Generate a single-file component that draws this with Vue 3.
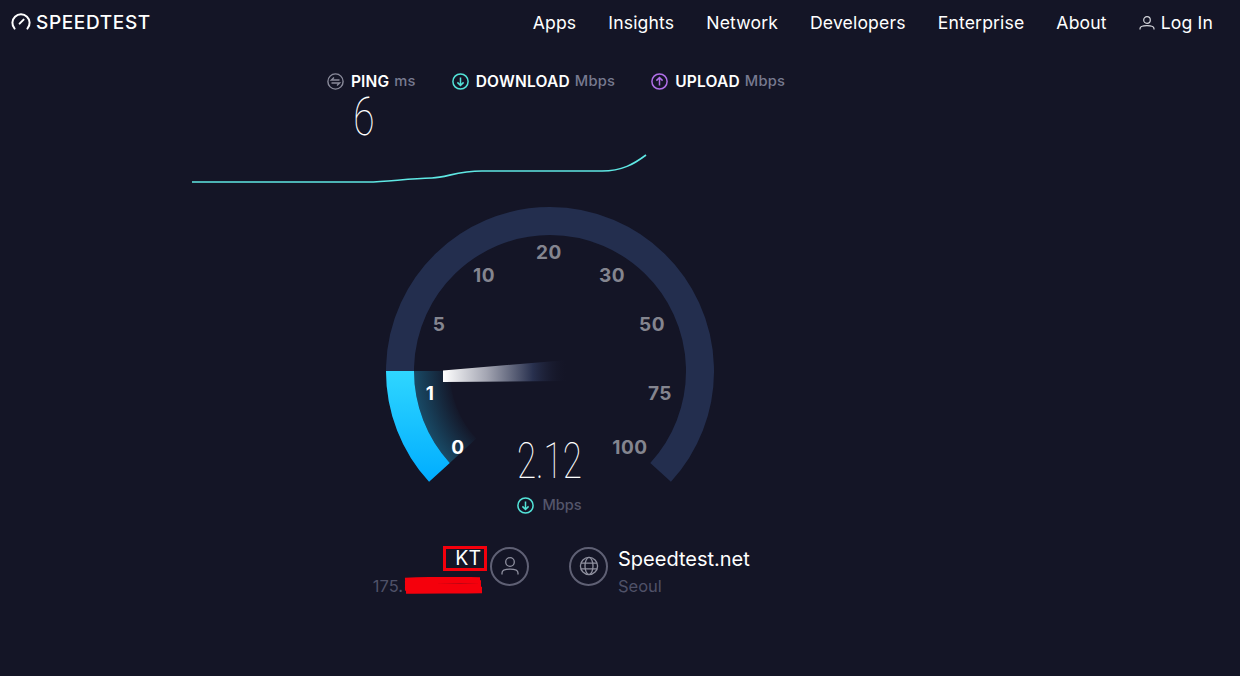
<script setup>
const navItems = ['Apps', 'Insights', 'Network', 'Developers', 'Enterprise', 'About']
const ticks = [
  { t: '0', x: 72, y: 240, on: true },
  { t: '1', x: 44, y: 186, on: true },
  { t: '5', x: 53, y: 117 },
  { t: '10', x: 98, y: 68 },
  { t: '20', x: 163, y: 45 },
  { t: '30', x: 226, y: 68 },
  { t: '50', x: 266, y: 117 },
  { t: '75', x: 274, y: 186 },
  { t: '100', x: 244, y: 240 }
]
</script>

<template>
  <div class="page">
    <header class="nav">
      <div class="brand">
        <svg class="brand-icon" width="20" height="18" viewBox="0 0 20 18" fill="none" stroke="#fff" stroke-width="2" stroke-linecap="round">
          <path d="M3.6 15.6A8.6 8.6 0 1 1 16.4 15.6" />
          <path d="M8.6 10.6 L12.6 6.6" />
        </svg>
        <span>SPEEDTEST</span>
      </div>
      <nav class="links">
        <a v-for="n in navItems" :key="n">{{ n }}</a>
        <a class="login">
          <svg width="16" height="16" viewBox="0 0 16 16" fill="none" stroke="#d5d6dc" stroke-width="1.2">
            <circle cx="8" cy="5" r="3.3" />
            <path d="M1 14.5v-.8c0-1.800 3-3 7-3s7 1.200 7 3v.8" />
          </svg>
          Log In
        </a>
      </nav>
    </header>

    <main class="main">
      <section class="stats">
        <div class="stat ping">
          <div class="stat-head">
            <svg width="17" height="17" viewBox="0 0 17 17" fill="none" stroke="#8a8b9b" stroke-width="1.4">
              <circle cx="8.5" cy="8.5" r="7.6" />
              <path d="M7 4.500 4.400 7H12.500M10 12.500 12.600 10H4.500" />
            </svg>
            <b>PING</b><span>ms</span>
          </div>
          <div class="big ping-val">6</div>
        </div>
        <div class="stat">
          <div class="stat-head">
            <svg width="17" height="17" viewBox="0 0 17 17" fill="none" stroke="#53e3d8" stroke-width="1.5">
              <circle cx="8.5" cy="8.5" r="7.6" />
              <path d="M8.500 4.500v8M5.400 9.400 8.500 12.500 11.600 9.400" />
            </svg>
            <b>DOWNLOAD</b><span>Mbps</span>
          </div>
        </div>
        <div class="stat">
          <div class="stat-head">
            <svg width="17" height="17" viewBox="0 0 17 17" fill="none" stroke="#b06fe8" stroke-width="1.5">
              <circle cx="8.5" cy="8.5" r="7.6" />
              <path d="M8.500 12.500v-8M5.400 7.600 8.500 4.500 11.600 7.600" />
            </svg>
            <b>UPLOAD</b><span>Mbps</span>
          </div>
        </div>
      </section>

      <svg class="graph" width="456" height="32" viewBox="0 0 456 32" fill="none">
        <path d="M0 29H176C195 29 215 25.500 240 25C255 24.500 265 18 290 18H410C430 18 442 11 454 2" stroke="#5fe8e4" stroke-width="1.6" />
      </svg>

      <section class="gauge">
        <svg width="328" height="290" viewBox="0 0 328 290" fill="none">
          <defs>
            <linearGradient id="fillGrad" gradientUnits="userSpaceOnUse" x1="0" y1="164" x2="0" y2="275">
              <stop offset="0" stop-color="#2fd6ff" />
              <stop offset="1" stop-color="#00adff" />
            </linearGradient>
            <radialGradient id="glow" gradientUnits="userSpaceOnUse" cx="164" cy="164" r="136">
              <stop offset="0.72" stop-color="#1d7fa6" stop-opacity="0" />
              <stop offset="1" stop-color="#1d7fa6" stop-opacity="0.5" />
            </radialGradient>
            <linearGradient id="needle" gradientUnits="userSpaceOnUse" x1="57" y1="0" x2="182" y2="0">
              <stop offset="0" stop-color="#ffffff" />
              <stop offset="0.35" stop-color="#a3a5b2" />
              <stop offset="0.72" stop-color="#28304e" />
              <stop offset="1" stop-color="#141526" stop-opacity="0" />
            </linearGradient>
          </defs>
          <path d="M53.400 265.400A150 150 0 1 1 274.600 265.400" stroke="#232e4e" stroke-width="28" />
          <path d="M28 164A136 136 0 0 0 63.700 255.900L90.300 231.600A100 100 0 0 1 64 164Z" fill="url(#glow)" />
          <path d="M14 164A150 150 0 0 0 53.400 265.400" stroke="url(#fillGrad)" stroke-width="28" />
          <path d="M57 163.500 182 153V174L57 175Z" fill="url(#needle)" />
          <text v-for="k in ticks" :key="k.t" :x="k.x" :y="k.y" class="tick" :class="{ on: k.on }">{{ k.t }}</text>
        </svg>
        <div class="readout">
          <div class="big speed">2.12</div>
          <div class="unit">
            <svg width="17" height="17" viewBox="0 0 17 17" fill="none" stroke="#53e3d8" stroke-width="1.5">
              <circle cx="8.5" cy="8.5" r="7.6" />
              <path d="M8.500 4.500v8M5.400 9.400 8.500 12.500 11.600 9.400" />
            </svg>
            <span>Mbps</span>
          </div>
        </div>
      </section>

      <section class="hosts">
        <div class="host left">
          <div class="host-text">
            <div class="host-name"><span class="kt">KT</span></div>
            <div class="host-sub ip">175.<svg class="scribble" width="80" height="18" viewBox="0 0 80 18" fill="none" stroke="#f5000c" stroke-width="3.6">
              <path d="M1 2.500C25 1.500 55 1.500 76 2M77 5C50 4 25 5 1 6M1 9C30 8 52 8 77 8.500M78 11.500C50 11 25 11 1 12M2 15C30 14.500 55 15 78 14.500" />
            </svg></div>
          </div>
          <div class="ring">
            <svg width="18" height="20" viewBox="0 0 18 20" fill="none" stroke="#8f909f" stroke-width="1.3">
              <circle cx="9" cy="6" r="4.300" />
              <path d="M1 18.500V17c0-2.500 3.500-3.800 8-3.800s8 1.300 8 3.800v1.500" />
            </svg>
          </div>
        </div>
        <div class="host right">
          <div class="ring">
            <svg width="20" height="20" viewBox="0 0 20 20" fill="none" stroke="#8f909f" stroke-width="1.3">
              <circle cx="10" cy="10" r="8.600" />
              <ellipse cx="10" cy="10" rx="4" ry="8.600" />
              <path d="M1.800 7.200H18.200M1.800 12.800H18.200" />
            </svg>
          </div>
          <div class="host-text">
            <div class="host-name">Speedtest.net</div>
            <div class="host-sub">Seoul</div>
          </div>
        </div>
      </section>
    </main>
  </div>
</template>

<style>
html, body { margin: 0; background: #141526; }
</style>

<style scoped>
.page {
  width: 1240px;
  height: 676px;
  overflow: hidden;
  background: #141526;
  color: #fff;
  font-family: Inter, "Liberation Sans", sans-serif;
}
.nav {
  height: 45px;
  display: flex;
  align-items: center;
  justify-content: space-between;
  padding: 0 27px 0 11px;
}
.brand {
  display: flex;
  align-items: center;
  gap: 5px;
  font-size: 19px;
  font-weight: 500;
  letter-spacing: 0.65px;
  margin-bottom: 1px;
}
.links {
  display: flex;
  align-items: center;
  gap: 32px;
  font-size: 17.6px;
  font-weight: 400;
  letter-spacing: 0.15px;
}
.login { display: flex; align-items: center; gap: 6px; }
.main {
  width: 1100px;
  display: flex;
  flex-direction: column;
  align-items: center;
}
.stats {
  display: flex;
  align-items: flex-start;
  gap: 36px;
  height: 107px;
  padding: 27px 0 0 12px;
  box-sizing: border-box;
  align-self: stretch;
  justify-content: center;
}
.stat { display: flex; flex-direction: column; }
.ping { align-items: center; }
.stat-head {
  display: flex;
  align-items: center;
  height: 18px;
  line-height: 17px;
  font-size: 14.7px;
}
.stat-head svg { margin-right: 7px; }
.stat-head b { font-weight: 600; font-size: 15.5px; letter-spacing: 0.2px; margin-right: 5px; }
.stat-head span { color: #777a90; font-weight: 500; letter-spacing: 0.2px; }
.big {
  font-family: Roboto, sans-serif;
  font-weight: 100;
  line-height: 1;
  font-size: 54px;
  transform: scaleX(0.72);
}
.ping-val { margin-left: -15px; }
.graph {
  display: block;
  margin: 1px 0 0 -261px;
}
.gauge {
  position: relative;
  width: 328px;
  height: 290px;
  margin-top: 22px;
}
.gauge > svg { display: block; }
.tick {
  font-family: Inter, sans-serif;
  font-size: 19px;
  font-weight: 700;
  letter-spacing: 0.5px;
  fill: #84858f;
  text-anchor: middle;
  dominant-baseline: central;
}
.tick.on { fill: #fff; }
.readout {
  position: absolute;
  left: 0;
  right: 0;
  top: 229px;
  display: flex;
  flex-direction: column;
  align-items: center;
}
.speed { font-size: 50px; transform: scaleX(0.7); margin-right: 1px; }
.unit {
  display: flex;
  align-items: center;
  gap: 8px;
  margin-top: 10px;
  margin-right: 1px;
  color: #54566b;
  font-size: 14.6px;
  font-weight: 500;
}
.hosts {
  display: grid;
  grid-template-columns: 1fr 1fr;
  column-gap: 40px;
  align-self: stretch;
  margin-top: 49px;
  padding-right: 2px;
}
.host { display: flex; gap: 9px; align-items: center; height: 40px; }
.host.right { gap: 10px; }
.host.left { justify-content: flex-end; }
.left .host-text { align-items: flex-end; text-align: right; }
.host-text { display: flex; flex-direction: column; gap: 5px; margin-top: 10px; }
.ring {
  width: 39px;
  height: 39px;
  box-sizing: border-box;
  border: 2px solid #5f6074;
  border-radius: 50%;
  display: flex;
  align-items: center;
  justify-content: center;
}
.host-name { font-size: 20px; font-weight: 400; line-height: 24px; }
.kt {
  display: block;
  width: 44px;
  height: 25px;
  margin-right: -6px;
  box-sizing: border-box;
  border: 3px solid #f5000c;
  padding-right: 3px;
  text-align: right;
  font-size: 19.5px;
  line-height: 19px;
}
.host-sub { font-size: 16.5px; color: #4f5168; line-height: 20px; }
.ip { position: relative; padding-right: 78px; }
.scribble { position: absolute; right: -3px; top: 1px; }
</style>
